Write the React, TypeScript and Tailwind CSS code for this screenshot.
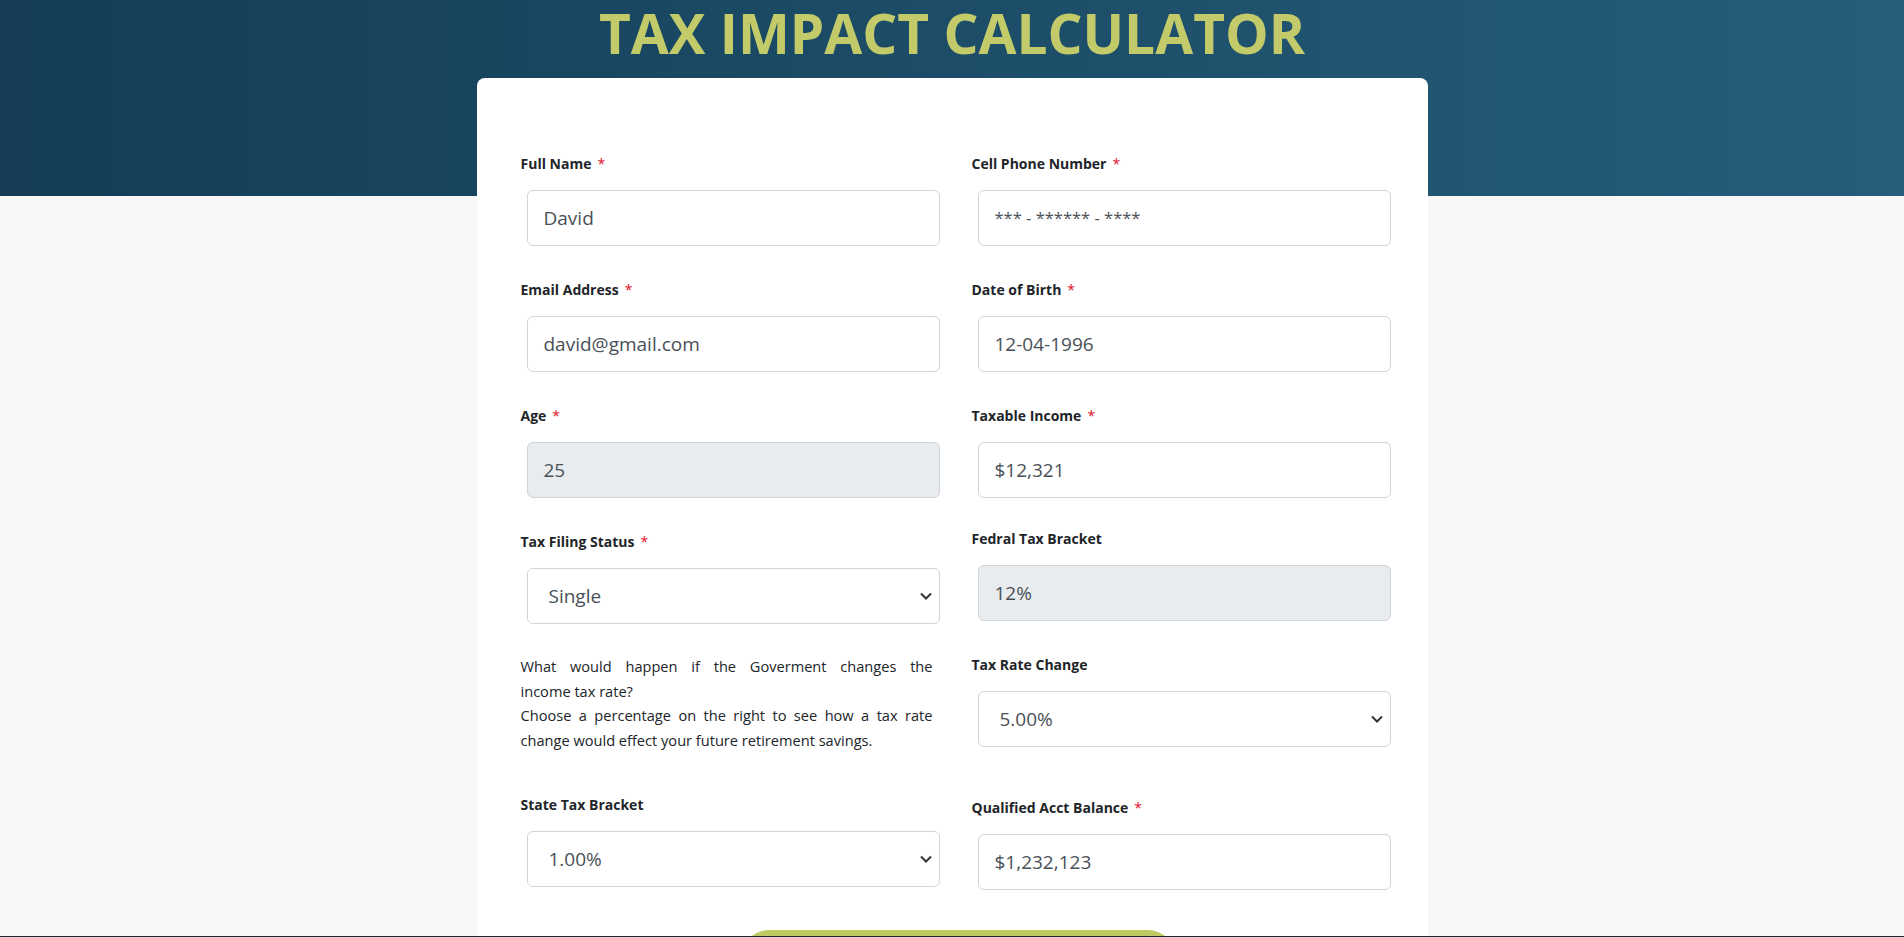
import React from 'react';

const font = { fontFamily: '"Open Sans", "Noto Sans", sans-serif' };

type FieldProps = {
  label: string;
  required?: boolean;
  value: string;
  disabled?: boolean;
  select?: boolean;
  small?: boolean;
};

const Field: React.FC<FieldProps> = ({ label, required, value, disabled, select, small }) => {
  return (
    <div>
      <div className={`flex items-start text-[14px] font-bold leading-[21px] text-[#212529] ${required ? 'pt-[3px]' : ''}`}>
        <span>{label}</span>
        {required && <span className="ml-[6px] text-[14px] leading-[21px] font-normal text-[#e0102a]">*</span>}
      </div>
      <div
        className={`mt-[16px] ml-[6px] w-[413px] h-[56px] flex items-center justify-between border border-[#ced4da] rounded-md text-[#495057] ${
          disabled ? 'bg-[#e9ecef]' : 'bg-white'
        } ${select ? 'pl-[21px] pr-[7px]' : 'pl-[16px] pr-4'}`}
      >
        <span className={small ? 'text-[16.5px]' : 'text-[19px]'}>{value}</span>
        {select && (
          <svg width="12" height="8" viewBox="0 0 12 8" fill="none">
            <path d="M1 1.5l5 5 5-5" stroke="#333" strokeWidth="2" />
          </svg>
        )}
      </div>
    </div>
  );
};

export default function App() {
  return (
    <div className="min-h-screen bg-[#f7f7f7]" style={font}>
      <header className="h-[196px] bg-linear-to-r from-[#143d55] to-[#255d7a] flex justify-center">
        <h1 className="pt-[5px] text-[55px] font-bold leading-none text-[#c2ca69]">TAX IMPACT CALCULATOR</h1>
      </header>

      <div className="mx-auto -mt-[118px] w-[951px] bg-white rounded-lg pt-[72px] pb-16 pl-[44px] pr-[31px]">
        <div className="grid grid-cols-[425px_425px] gap-x-[26px] gap-y-[30px]">
          <Field label="Full Name" required value="David" />
          <Field label="Cell Phone Number" required value="*** - ****** - ****" small />
          <Field label="Email Address" required value="david@gmail.com" />
          <Field label="Date of Birth" required value="12-04-1996" />
          <Field label="Age" required value="25" disabled />
          <Field label="Taxable Income" required value="$12,321" />
          <Field label="Tax Filing Status" required value="Single" select />
          <Field label="Fedral Tax Bracket" value="12%" disabled />

          <div className="w-[412px] pb-[12px] text-[14.6px] leading-[24.5px] text-[#212529]">
            <span className="block text-justify [text-align-last:justify]">What would happen if the Goverment changes the</span>
            <span className="block">income tax rate?</span>
            <span className="block text-justify [text-align-last:justify]">Choose a percentage on the right to see how a tax rate</span>
            <span className="block">change would effect your future retirement savings.</span>
          </div>
          <Field label="Tax Rate Change" value="5.00%" select />

          <Field label="State Tax Bracket" value="1.00%" select />
          <Field label="Qualified Acct Balance" required value="$1,232,123" />
        </div>

        <button className="block mx-auto mt-[40px] w-[435px] h-[56px] rounded-full bg-[#bfca63] text-white text-[18px] font-bold">
          CALCULATE
        </button>
      </div>

      <div className="fixed bottom-0 left-0 right-0 h-px bg-[#1d2b33]" />
    </div>
  );
}
